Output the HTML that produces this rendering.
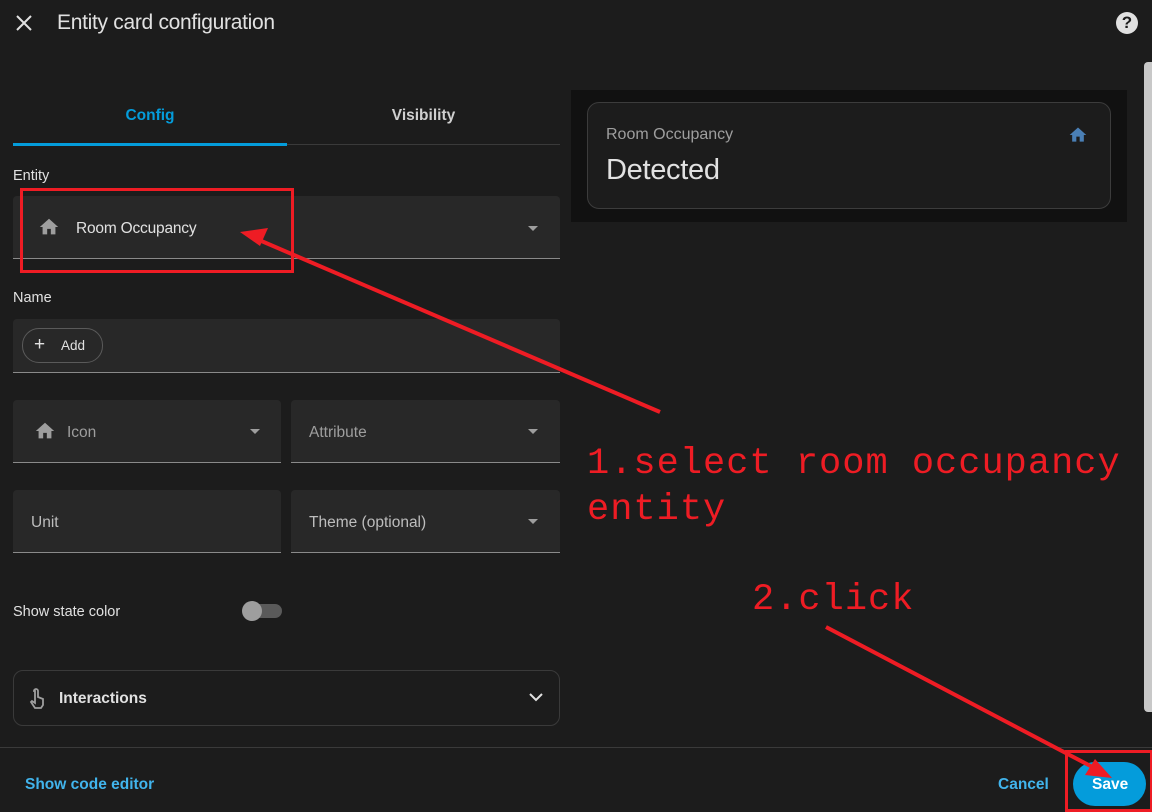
<!DOCTYPE html>
<html><head><style>
body{margin:0;width:1152px;height:809px;background:#1c1c1c;font-family:"Liberation Sans",sans-serif;color:#e1e1e1;position:relative;overflow:hidden}
.a{position:absolute}
.f{position:absolute;background:#282828;border-bottom:1px solid #8a8a8a;border-radius:4px 4px 0 0}
.lbl{font-size:14.5px;color:#e1e1e1}
.ph{font-size:15.5px;color:#9e9e9e}
.tri{position:absolute;width:0;height:0;border-left:5px solid transparent;border-right:5px solid transparent;border-top:5px solid #9e9e9e}
.ann{position:absolute;color:#ee1c24;font-family:"Liberation Mono",monospace;font-size:37px;letter-spacing:1px;line-height:46px}
</style></head><body>
<svg class="a" style="left:14px;top:13px" width="20" height="20" viewBox="0 0 20 20"><path d="M3 3L17 17M17 3L3 17" stroke="#e1e1e1" stroke-width="2"/></svg>
<div class="a" style="left:57px;top:11px;font-size:21px;color:#e1e1e1;letter-spacing:-0.3px">Entity card configuration</div>
<div class="a" style="left:1116px;top:12px;width:22px;height:22px;border-radius:50%;background:#e1e1e1;color:#1c1c1c;font-weight:bold;font-size:17px;text-align:center;line-height:22px">?</div>

<div class="a" style="left:13px;top:107px;width:274px;text-align:center;color:#049cdb;font-size:15.5px;font-weight:bold">Config</div>
<div class="a" style="left:287px;top:107px;width:273px;text-align:center;color:#d0d0d0;font-size:15.5px;font-weight:bold">Visibility</div>
<div class="a" style="left:13px;top:144px;width:547px;height:1px;background:#3a3a3a"></div>
<div class="a" style="left:13px;top:143px;width:274px;height:3px;background:#049cdb"></div>

<div class="a lbl" style="left:13px;top:168px">Entity</div>
<div class="f" style="left:13px;top:196px;width:547px;height:62px"></div>
<svg class="a" style="left:37px;top:216px" width="24" height="22" viewBox="0 0 24 24"><path d="M10 20v-6h4v6h5v-8h3L12 3 2 12h3v8z" fill="#9e9e9e"/></svg>
<div class="a" style="left:76px;top:220px;font-size:15.5px;color:#e1e1e1;letter-spacing:-0.2px">Room Occupancy</div>
<div class="tri" style="left:528px;top:226px"></div>

<div class="a lbl" style="left:13px;top:290px">Name</div>
<div class="f" style="left:13px;top:319px;width:547px;height:53px"></div>
<div class="a" style="left:22px;top:328px;width:79px;height:33px;border:1px solid #5a5a5a;border-radius:17px"></div>
<div class="a" style="left:34px;top:334px;font-size:19px;color:#e1e1e1">+</div>
<div class="a" style="left:61px;top:338px;font-size:13.5px;color:#e1e1e1">Add</div>

<div class="f" style="left:13px;top:400px;width:268px;height:62px"></div>
<svg class="a" style="left:33px;top:420px" width="24" height="22" viewBox="0 0 24 24"><path d="M10 20v-6h4v6h5v-8h3L12 3 2 12h3v8z" fill="#9e9e9e"/></svg>
<div class="a ph" style="left:67px;top:424px">Icon</div>
<div class="tri" style="left:250px;top:429px"></div>
<div class="f" style="left:291px;top:400px;width:269px;height:62px"></div>
<div class="a ph" style="left:309px;top:424px">Attribute</div>
<div class="tri" style="left:528px;top:429px"></div>

<div class="f" style="left:13px;top:490px;width:268px;height:62px"></div>
<div class="a ph" style="left:31px;top:514px;color:#bdbdbd">Unit</div>
<div class="f" style="left:291px;top:490px;width:269px;height:62px"></div>
<div class="a ph" style="left:309px;top:514px;color:#bdbdbd">Theme (optional)</div>
<div class="tri" style="left:528px;top:519px"></div>

<div class="a lbl" style="left:13px;top:604px">Show state color</div>
<div class="a" style="left:244px;top:604px;width:38px;height:14px;border-radius:7px;background:#5a5a5a"></div>
<div class="a" style="left:242px;top:601px;width:20px;height:20px;border-radius:50%;background:#9e9e9e"></div>

<div class="a" style="left:13px;top:670px;width:545px;height:54px;border:1px solid #3a3a3a;border-radius:10px"></div>
<svg class="a" style="left:28px;top:687px" width="18" height="22" viewBox="0 0 18 22"><path d="M6 4a2 2 0 0 1 4 0v6l5 2v6l-2 3H7L3 15l1-1 3 2V4z" fill="none" stroke="#9e9e9e" stroke-width="1.8"/></svg>
<div class="a" style="left:59px;top:690px;font-size:15.5px;font-weight:bold;color:#e1e1e1">Interactions</div>
<svg class="a" style="left:528px;top:690px" width="16" height="14" viewBox="0 0 16 14"><path d="M2 4l6 6 6-6" fill="none" stroke="#e1e1e1" stroke-width="2"/></svg>

<div class="a" style="left:571px;top:90px;width:556px;height:132px;background:#111"></div>
<div class="a" style="left:587px;top:102px;width:522px;height:105px;border:1px solid #3c3c3c;border-radius:12px;background:#1c1c1c"></div>
<div class="a" style="left:606px;top:126px;font-size:16px;color:#9e9e9e">Room Occupancy</div>
<div class="a" style="left:606px;top:154px;font-size:29px;color:#e1e1e1;letter-spacing:-0.3px">Detected</div>
<svg class="a" style="left:1067px;top:125px" width="22" height="20" viewBox="0 0 24 24"><path d="M10 20v-6h4v6h5v-8h3L12 3 2 12h3v8z" fill="#4a7fb5"/></svg>

<div class="a" style="left:1144px;top:62px;width:8px;height:650px;background:#c8c8c8;border-radius:4px 0 0 4px"></div>

<div class="a" style="left:0;top:747px;width:1152px;height:1px;background:#3a3a3a"></div>
<div class="a" style="left:25px;top:776px;font-size:15.5px;font-weight:bold;color:#41b4ec">Show code editor</div>
<div class="a" style="left:998px;top:776px;font-size:15.5px;font-weight:bold;color:#41b4ec">Cancel</div>
<div class="a" style="left:1073px;top:762px;width:73px;height:44px;border-radius:22px;background:#049cdb"></div>
<div class="a" style="left:1092px;top:776px;font-size:15.5px;font-weight:bold;color:#fff">Save</div>

<div class="a" style="left:20px;top:188px;width:268px;height:79px;border:3px solid #ee1c24"></div>
<div class="a" style="left:1065px;top:750px;width:82px;height:56px;border:3px solid #ee1c24"></div>
<svg class="a" style="left:0;top:0" width="1152" height="809">
<path d="M660 412L252 237" stroke="#ee1c24" stroke-width="4"/>
<path d="M240 232L268 228L260 246Z" fill="#ee1c24"/>
<path d="M826 627L1100 771" stroke="#ee1c24" stroke-width="4"/>
<path d="M1112 778L1085 775L1095 759Z" fill="#ee1c24"/>
</svg>
<div class="ann" style="left:587px;top:441px">1.select room occupancy<br>entity</div>
<div class="ann" style="left:752px;top:577px">2.click</div>
</body></html>
